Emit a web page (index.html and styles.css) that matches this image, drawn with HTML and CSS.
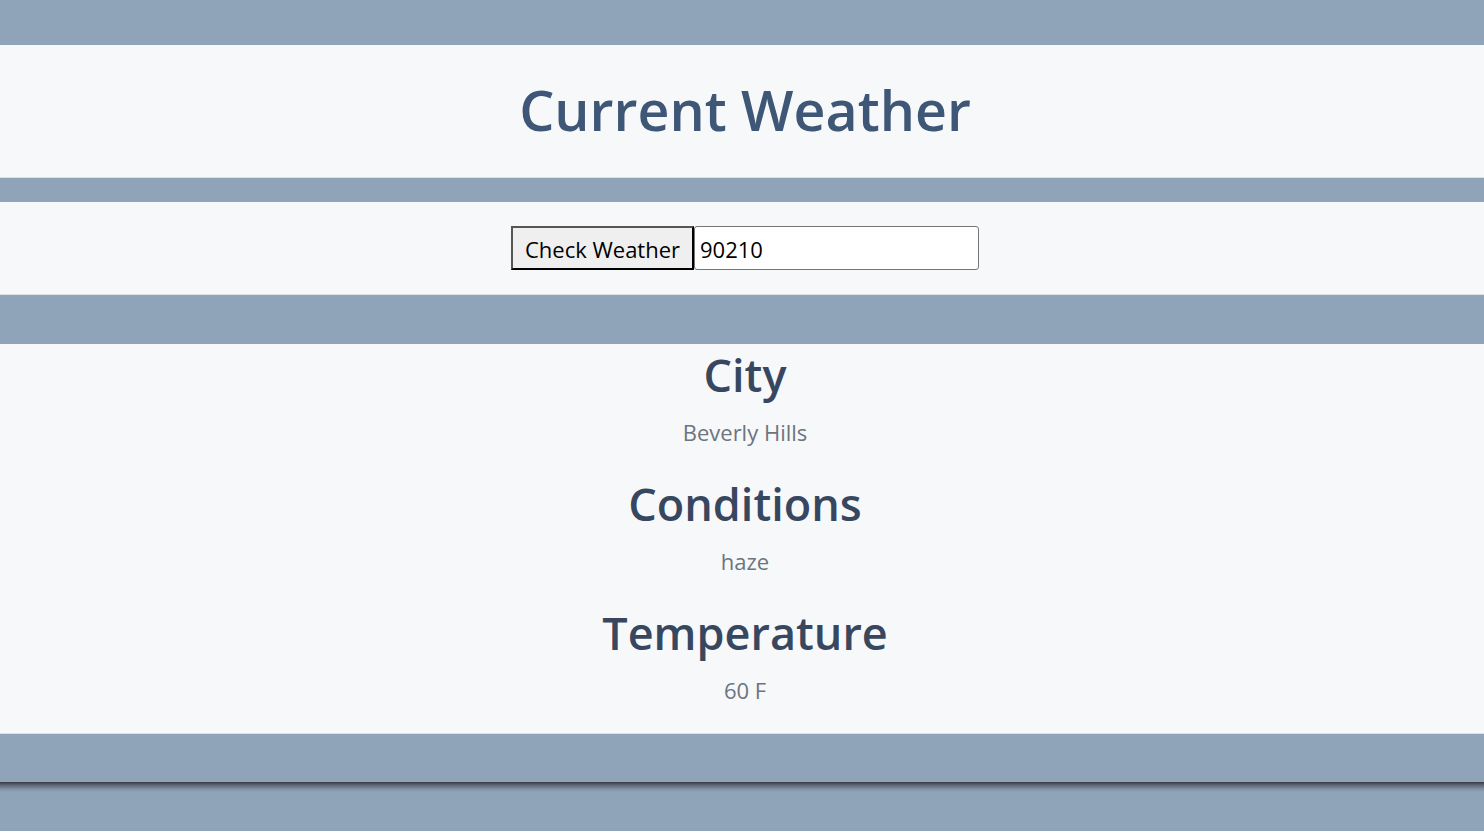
FILE: index.html
```html
<!DOCTYPE html>
<html lang="en">
<head>
<meta charset="utf-8">
<title>Current Weather</title>
<link rel="stylesheet" href="styles.css">
</head>
<body>
<div class="page">
  <header class="panel header">
    <h1 class="title">Current Weather</h1>
  </header>
  <section class="panel form-panel">
    <form class="weather-form">
      <button type="button" class="check-btn">Check Weather</button>
      <input class="zip-input" type="text" value="90210">
    </form>
  </section>
  <section class="panel results">
    <h2 class="label">City</h2>
    <p class="value">Beverly Hills</p>
    <h2 class="label">Conditions</h2>
    <p class="value">haze</p>
    <h2 class="label">Temperature</h2>
    <p class="value">60 F</p>
  </section>
  <footer class="footer"></footer>
</div>
</body>
</html>
```
FILE: styles.css
```css
html, body {
  margin: 0;
  padding: 0;
  background: #8fa4b8;
  font-family: "Open Sans", "Noto Sans", sans-serif;
}
.page {
  padding-top: 45px;
  display: flex;
  flex-direction: column;
}
.panel {
  background: #f7f8fa;
  border-bottom: 1px solid #dcdfe3;
  text-align: center;
  padding-left: 6px;
}
.header {
  height: 132px;
  display: flex;
  align-items: center;
  justify-content: center;
}
.title {
  margin: 0 0 2px;
  font-size: 55.5px;
  font-weight: 600;
  color: #3f5777;
  line-height: 1;
}
.form-panel {
  margin-top: 24px;
  height: 92px;
  display: flex;
  align-items: center;
  justify-content: center;
}
.weather-form {
  display: flex;
  align-items: stretch;
  height: 44px;
}
.check-btn {
  font-family: inherit;
  font-size: 22px;
  color: #000;
  background: #efefef;
  border: 2px solid #000;
  border-color: #555 #000 #000 #555;
  padding: 2px 10px 0;
  width: 183px;
  margin: 0;
}
.zip-input {
  font-family: inherit;
  font-size: 22px;
  color: #000;
  background: #fff;
  border: 1px solid #767676;
  border-radius: 3px;
  padding: 2px 5px 0;
  width: 273px;
  margin: 0;
}
.results {
  margin-top: 49px;
  height: 390px;
  display: flex;
  flex-direction: column;
  align-items: center;
  padding-top: 5px;
  box-sizing: border-box;
}
.label {
  margin: 0;
  font-size: 45px;
  font-weight: 600;
  line-height: 52px;
  color: #384760;
}
.value {
  margin: 16px 0 31px;
  font-size: 22px;
  line-height: 30px;
  color: #6c757d;
}
.value:last-child {
  margin-bottom: 0;
}
.footer {
  padding-top: 48px;
  background: #8fa4b8;
}
.footer::after {
  content: "";
  display: block;
  height: 10px;
  background: linear-gradient(to bottom, #363a44 0%, #5d6570 30%, #7f92a4 70%, #8fa4b8 100%);
}
```
